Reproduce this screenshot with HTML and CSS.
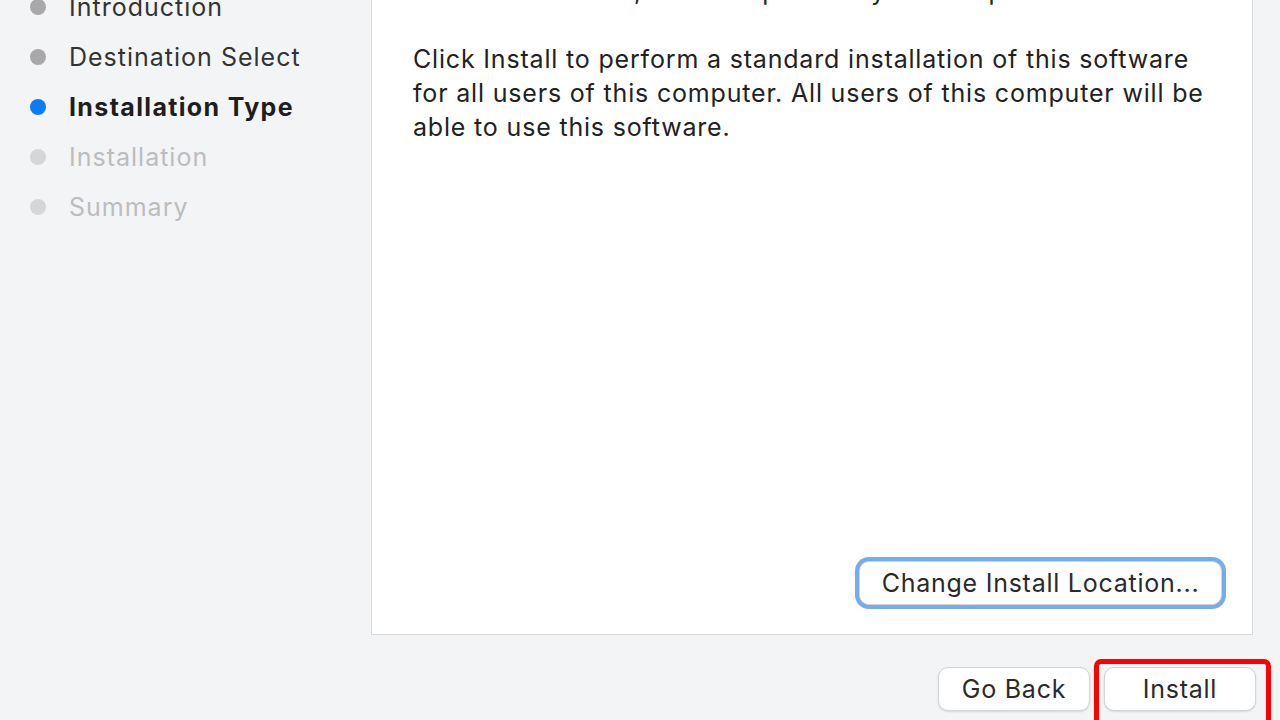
FILE: index.html
```html
<!DOCTYPE html>
<html lang="en">

<head>
    <meta charset="UTF-8">
    <meta name="viewport" content="width=device-width, initial-scale=1.0">
    <title>Install</title>
    <link rel="stylesheet" href="styles.css">
</head>

<body>
    <div class="window">
        <ul class="steps">
            <li class="step done"><span class="dot"></span>Introduction</li>
            <li class="step done"><span class="dot"></span>Destination Select</li>
            <li class="step current"><span class="dot"></span>Installation Type</li>
            <li class="step todo"><span class="dot"></span>Installation</li>
            <li class="step todo"><span class="dot"></span>Summary</li>
        </ul>

        <div class="main">
            <div class="panel">
                <p>This will take 300,2 MB of space on your computer.</p>
                <p>Click Install to perform a standard installation of this software<br>
                    for all users of this computer. All users of this computer will be<br>
                    able to use this software.</p>
                <button class="btn focus">Change Install Location...</button>
            </div>

            <div class="footer">
                <button class="btn">Go Back</button>
                <div class="marked">
                    <button class="btn">Install</button>
                    <span class="highlight"></span>
                </div>
            </div>
        </div>
    </div>
</body>

</html>
```

FILE: styles.css
```css
body {
    font-family: Inter, "Liberation Sans", Arial, sans-serif;
    background-color: #f3f4f6;
    margin: 0;
    padding: 0;
    height: 720px;
    overflow: hidden;
    color: #222;
}

.window {
    display: flex;
    margin-top: -60px;
    height: 780px;
}

/* sidebar */
.steps {
    list-style: none;
    width: 371px;
    margin: 0;
    padding: 42px 0 0 30px;
    box-sizing: border-box;
}

.step {
    display: flex;
    align-items: center;
    height: 50px;
    font-size: 25px;
    letter-spacing: 1px;
    color: #333;
}

.dot {
    width: 16px;
    height: 16px;
    border-radius: 50%;
    background-color: #a8a8aa;
    margin-right: 23px;
}

.step.current {
    font-weight: bold;
    letter-spacing: 1.35px;
    color: #1e1e1e;
}

.step.current .dot {
    background-color: #0b7cf7;
}

.step.todo {
    color: #bcbcbe;
}

.step.todo .dot {
    background-color: #d6d6d8;
}

/* main area */
.main {
    display: flex;
    flex-direction: column;
    width: 882px;
}

.panel {
    background-color: #fff;
    border: 1px solid #dadada;
    height: 695px;
    box-sizing: border-box;
    padding: 33px 26px 25px 41px;
    display: flex;
    flex-direction: column;
}

.panel p {
    margin: 0 0 34px 0;
    font-size: 25px;
    line-height: 34px;
    letter-spacing: 0.82px;
    color: #222;
    white-space: nowrap;
}

.btn {
    font-family: Inter, "Liberation Sans", Arial, sans-serif;
    font-size: 25px;
    letter-spacing: 0.75px;
    color: #2a2a2a;
    background-color: #fff;
    border: 1px solid #d4d4d6;
    border-radius: 10px;
    height: 44px;
    box-shadow: 0 1px 2px rgba(0, 0, 0, 0.12);
    padding: 0;
    width: 152px;
}

.btn.focus {
    margin-top: auto;
    align-self: flex-end;
    width: 363px;
    margin-right: 4px;
    margin-bottom: 4px;
    box-shadow: 0 0 0 4px #75acef;
}

.footer {
    display: flex;
    justify-content: flex-end;
    gap: 14px;
    padding-top: 32px;
    margin-right: -3px;
}

.marked {
    position: relative;
}

.highlight {
    position: absolute;
    left: -10px;
    right: -15px;
    top: -8px;
    bottom: -20px;
    border: 5px solid #ff0000;
    border-radius: 7px;
}
```
